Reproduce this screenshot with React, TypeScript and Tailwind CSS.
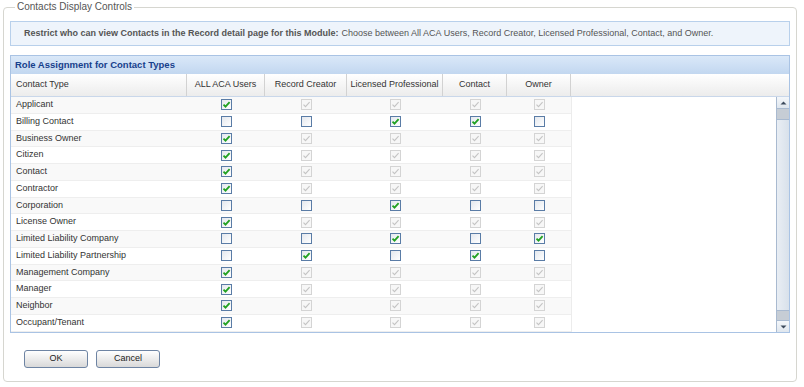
import React from "react";

type Cell = "c" | "u" | "d";

const ROWS: [string, Cell[]][] = [
  ["Applicant", ["c", "d", "d", "d", "d"]],
  ["Billing Contact", ["u", "u", "c", "c", "u"]],
  ["Business Owner", ["c", "d", "d", "d", "d"]],
  ["Citizen", ["c", "d", "d", "d", "d"]],
  ["Contact", ["c", "d", "d", "d", "d"]],
  ["Contractor", ["c", "d", "d", "d", "d"]],
  ["Corporation", ["u", "u", "c", "u", "u"]],
  ["License Owner", ["c", "d", "d", "d", "d"]],
  ["Limited Liability Company", ["u", "u", "c", "u", "c"]],
  ["Limited Liability Partnership", ["u", "c", "u", "c", "u"]],
  ["Management Company", ["c", "d", "d", "d", "d"]],
  ["Manager", ["c", "d", "d", "d", "d"]],
  ["Neighbor", ["c", "d", "d", "d", "d"]],
  ["Occupant/Tenant", ["c", "d", "d", "d", "d"]],
];

const COLS = [
  { label: "ALL ACA Users", w: "w-[78px]" },
  { label: "Record Creator", w: "w-[82px]" },
  { label: "Licensed Professional", w: "w-[96px]" },
  { label: "Contact", w: "w-[64px]" },
  { label: "Owner", w: "w-[64px]" },
];

function Box({ state }: { state: Cell }) {
  const disabled = state === "d";
  const checked = state !== "u";
  return (
    <span
      className={
        disabled
          ? "flex h-[11px] w-[11px] items-center justify-center border border-[#d4d4d4] bg-[#f7f7f7]"
          : "flex h-[11px] w-[11px] items-center justify-center border border-[#5a7ca6] bg-gradient-to-br from-[#e4e8ee] to-white"
      }
    >
      {checked && (
        <svg width="9" height="9" viewBox="0 0 9 9">
          <path
            d="M1.5 4.6 L3.5 6.6 L7.6 2.2"
            fill="none"
            stroke={disabled ? "#c4c4c4" : "#21a121"}
            strokeWidth={disabled ? 1.1 : 1.8}
          />
        </svg>
      )}
    </span>
  );
}

export default function App() {
  return (
    <div className="h-[387px] w-[804px] bg-white font-['Liberation_Sans',Arial,sans-serif] text-[#333]">
      <fieldset className="ml-[3px] w-[794px] h-[382px] rounded-[4px] border border-[#d6d6d0] px-[6px]">
        <legend className="ml-[5px] px-[2px] text-[10px] leading-[14px] text-[#555]">
          Contacts Display Controls
        </legend>

        {/* Info box */}
        <div className="mt-[7px] flex h-[25px] w-[780px] items-center border border-[#b8d0eb] bg-[#eef4fb] pl-[13px] text-[9px] text-[#555]">
          <span className="font-bold">
            Restrict who can view Contacts in the Record detail page for this Module:
          </span>
          <span className="ml-[3px]">
            Choose between All ACA Users, Record Creator, Licensed Professional, Contact, and Owner.
          </span>
        </div>

        {/* Grid */}
        <div className="mt-[9px] w-[780px] border border-[#a9c3e4]">
          <div className="flex h-[18px] items-center bg-gradient-to-b from-[#dae8f8] to-[#c2d7f0] pl-[4px] text-[9.5px] font-bold text-[#17408c]">
            Role Assignment for Contact Types
          </div>
          <div className="flex h-[23px] border-b border-[#c9d7ea] bg-gradient-to-b from-white to-[#ececec] text-[9px] text-[#333]">
            <div className="flex w-[176px] items-center border-r border-[#d2d2d2] pl-[5px]">Contact Type</div>
            {COLS.map((c) => (
              <div key={c.label} className={`flex ${c.w} items-center justify-center border-r border-[#d2d2d2]`}>
                {c.label}
              </div>
            ))}
            <div className="flex-1" />
          </div>
          <div className="flex h-[235px]">
            <div className="flex w-[561px] flex-col border-r border-[#ececec]">
              {ROWS.map(([name, cells], i) => (
                <div
                  key={name}
                  className={`flex h-[16.75px] items-center border-b border-[#eeeeee] text-[9px] text-[#333] ${
                    i % 2 === 0 ? "bg-[#f9f9f9]" : "bg-white"
                  }`}
                >
                  <div className="w-[176px] pl-[5px]">{name}</div>
                  {cells.map((s, j) => (
                    <div key={j} className={`flex ${COLS[j].w} justify-center`}>
                      <Box state={s} />
                    </div>
                  ))}
                </div>
              ))}
            </div>
            <div className="flex-1" />
            {/* Scrollbar */}
            <div className="flex w-[13px] flex-col border-l border-[#a9bad0] bg-[#c6cdd5]">
              <div className="flex h-[12px] items-center justify-center border-b border-[#a9bad0] bg-gradient-to-b from-[#f4f7fa] to-[#dfe6ee]">
                <svg width="7" height="4" viewBox="0 0 7 4">
                  <path d="M0.5 3.5 L3.5 0.5 L6.5 3.5 Z" fill="#3c4a5c" />
                </svg>
              </div>
              <div className="h-[10px]" />
              <div className="h-[192px] border-y border-[#a9bad0] bg-gradient-to-r from-[#e9eef4] to-[#d8e1eb]" />
              <div className="flex-1" />
              <div className="flex h-[12px] items-center justify-center border-t border-[#a9bad0] bg-gradient-to-b from-[#f4f7fa] to-[#dfe6ee]">
                <svg width="7" height="4" viewBox="0 0 7 4">
                  <path d="M0.5 0.5 L3.5 3.5 L6.5 0.5 Z" fill="#3c4a5c" />
                </svg>
              </div>
            </div>
          </div>
        </div>

        {/* Buttons */}
        <div className="mt-[17px] flex gap-[8px] pl-[14px]">
          {["OK", "Cancel"].map((b) => (
            <button
              key={b}
              className="h-[18px] w-[64px] rounded-[3px] border border-[#6e84a3] bg-gradient-to-b from-white to-[#d9d9d9] text-[9px] text-[#222]"
            >
              {b}
            </button>
          ))}
        </div>
      </fieldset>
    </div>
  );
}
